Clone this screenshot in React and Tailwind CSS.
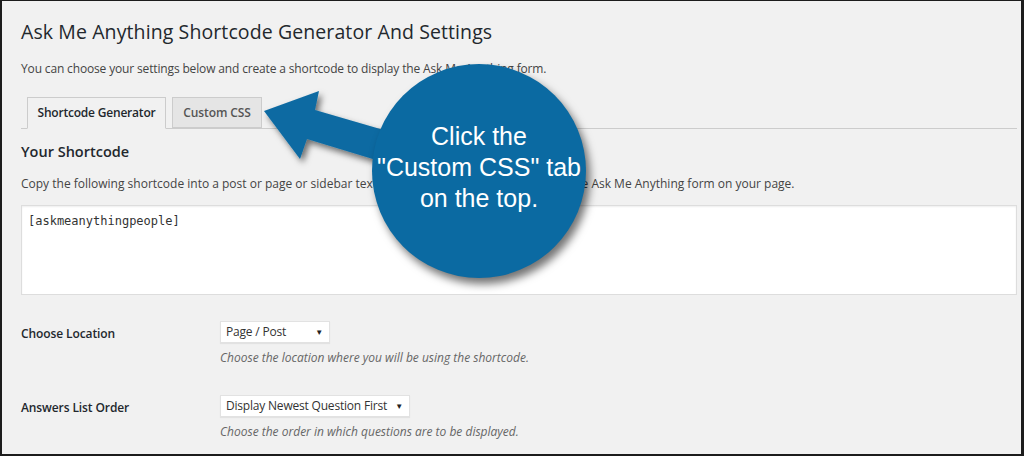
import React from 'react';

const sans = { fontFamily: '"Open Sans", "Noto Sans", sans-serif' };

const SelectBox = ({ label, width }) => (
  <div className={`${width} h-[22px] bg-white border border-[#e2e2e2] shadow-[0_1px_1px_rgba(0,0,0,0.06)] flex items-center justify-between pl-[5px] pr-[6px] text-[12px] tracking-[-0.2px] text-[#333] whitespace-nowrap`}>
    <span>{label}</span>
    <span className="text-[8px] text-[#222]">▼</span>
  </div>
);

const SettingRow = ({ label, value, width, help, className }) => (
  <div className={className}>
    <div className="flex items-center h-[22px]">
      <div className="w-[199px] text-[12px] font-semibold tracking-[-0.1px] text-[#23282d] pt-[3px]">{label}</div>
      <SelectBox label={value} width={width} />
    </div>
    <p className="ml-[199px] mt-[6px] h-[18px] leading-[18px] text-[12px] italic text-[#666]">{help}</p>
  </div>
);

export default function App() {
  return (
    <div
      className="relative w-[1024px] h-[456px] overflow-hidden bg-[#f1f1f1] border-t border-l-2 border-r-[3px] border-b-2 border-[#1c1c1c]"
      style={sans}
    >
      <div className="pl-[19px] pr-[4px] pt-[16px]">
        <h1 className="h-[30px] leading-[30px] text-[19.5px] tracking-[0.1px] text-[#23282d]">
          Ask Me Anything Shortcode Generator And Settings
        </h1>
        <p className="mt-[13px] h-[18px] leading-[18px] text-[12px] tracking-[-0.15px] text-[#444]">
          You can choose your settings below and create a shortcode to display the Ask Me Anything form.
        </p>

        <div className="mt-[19px] flex items-end gap-[6px] pl-[6px] border-b border-[#ccc] h-[32px]">
          <div className="h-[32px] w-[139px] flex items-center justify-center bg-[#f1f1f1] border border-[#ccc] border-b-[#f1f1f1] -mb-px text-[12px] tracking-[-0.2px] font-semibold text-[#23282d]">
            Shortcode Generator
          </div>
          <div className="h-[31px] w-[90px] flex items-center justify-center bg-[#e5e5e5] border border-[#ccc] text-[12px] tracking-[-0.1px] font-semibold text-[#555]">
            Custom CSS
          </div>
        </div>

        <h2 className="mt-[13px] h-[20px] leading-[20px] text-[14.5px] font-semibold text-[#23282d]">Your Shortcode</h2>
        <p className="mt-[13px] h-[18px] leading-[18px] text-[12px] text-[#444]">
          Copy the following shortcode into a post or page or sidebar text widget where you want to display the Ask Me Anything form on your page.
        </p>

        <div
          className="mt-[12px] h-[90px] bg-white border border-[#ddd] shadow-[inset_0_1px_2px_rgba(0,0,0,0.07)] px-[6px] py-[6px] text-[12px] text-[#333]"
          style={{ fontFamily: '"DejaVu Sans Mono", "Liberation Mono", monospace' }}
        >
          [askmeanythingpeople]
        </div>

        <SettingRow
          className="mt-[26px]"
          label="Choose Location"
          value="Page / Post"
          width="w-[110px]"
          help="Choose the location where you will be using the shortcode."
        />
        <SettingRow
          className="mt-[28px]"
          label="Answers List Order"
          value="Display Newest Question First"
          width="w-[190px]"
          help="Choose the order in which questions are to be displayed."
        />
      </div>

      {/* callout arrow */}
      <svg className="absolute left-0 top-0 pointer-events-none" width="1024" height="456">
        <defs>
          <filter id="sh" x="-20%" y="-20%" width="150%" height="150%">
            <feDropShadow dx="3" dy="4" stdDeviation="3" floodColor="#000" floodOpacity="0.55" />
          </filter>
        </defs>
        <polygon
          points="262,110 317,90 313,109 392,132 384,162 305,138 298,158"
          fill="#0b6aa2"
          filter="url(#sh)"
        />
      </svg>

      {/* callout circle */}
      <div
        className="absolute left-[370px] top-[63px] w-[214px] h-[214px] rounded-full bg-[#0b6aa2] shadow-[4px_6px_8px_rgba(0,0,0,0.55)] flex flex-col items-center justify-center text-white text-[25px] leading-[31px] pb-[8px]"
        style={{ fontFamily: '"Liberation Sans", Arial, sans-serif' }}
      >
        <span>Click the</span>
        <span>"Custom CSS" tab</span>
        <span>on the top.</span>
      </div>
    </div>
  );
}
